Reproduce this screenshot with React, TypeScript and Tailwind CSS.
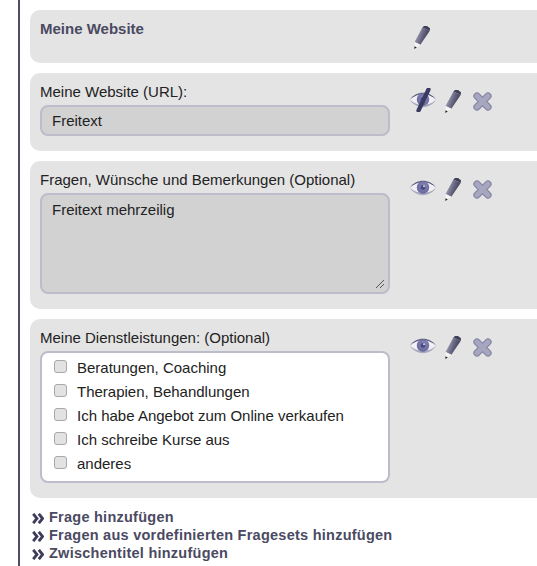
const font = { fontFamily: '"Liberation Sans", Arial, sans-serif' };

function Defs() {
  return (
    <svg width="0" height="0" className="absolute">
      <defs>
        <linearGradient id="pen" x1="0" y1="0.2" x2="1" y2="0.6">
          <stop offset="0" stopColor="#b4b4c8" />
          <stop offset="0.55" stopColor="#646480" />
          <stop offset="1" stopColor="#2f2f45" />
        </linearGradient>
        <radialGradient id="iris" cx="0.55" cy="0.4" r="0.6">
          <stop offset="0" stopColor="#8a8abc" />
          <stop offset="1" stopColor="#66669a" />
        </radialGradient>
      </defs>
    </svg>
  );
}

function Pencil() {
  return (
    <svg width="16" height="23" viewBox="0 0 16 23" className="block shrink-0">
      <path d="M8.4 1.6 L15.8 4.8 L6.4 18.8 L0.6 16 Z" fill="url(#pen)" />
      <path d="M8.4 1.6 L10 0 L13 0 L16 2.2 L15.8 4.8 Z" fill="#3f3f58" />
      <path d="M0.6 16 L6.4 18.8 L0.4 23 Z" fill="#f4f4f4" />
      <path d="M0.5 20.2 L2.8 21.5 L0.3 23 Z" fill="#1e1e1e" />
    </svg>
  );
}

function Cross() {
  return (
    <svg width="19" height="19" viewBox="0 0 19 19" className="block shrink-0">
      <path d="M4 4 L15 15 M15 4 L4 15" stroke="#80809f" strokeWidth="7.2" strokeLinecap="round" />
      <path d="M4 4 L15 15 M15 4 L4 15" stroke="#a6a6c0" strokeWidth="5.2" strokeLinecap="round" />
    </svg>
  );
}

function Eye({ off = false }: { off?: boolean }) {
  return (
    <svg width="28" height="24" viewBox="0 0 28 24" className="block shrink-0">
      <path d="M1 11.5 C7 2.5 21 2.5 27 11.5 C21 5.5 7 5.5 1 11.5 Z" fill="#5a5a80" />
      <path d="M1 12 C7 21.5 21 21.5 27 12 C21 18 7 18 1 12 Z" fill="#a8a8c0" />
      <path d="M2 11.5 C8 4.5 20 4.5 26 11.5 C20 18.5 8 18.5 2 11.5 Z" fill="#f0f0f5" />
      <circle cx="14" cy="11.5" r="6.2" fill="url(#iris)" />
      <circle cx="14" cy="11.5" r="2.4" fill="#4a4a80" />
      <circle cx="15" cy="10.2" r="0.9" fill="#e8e8f4" />
      {off && <path d="M19.5 1.5 L9.5 22.5" stroke="#3a3a62" strokeWidth="4.2" strokeLinecap="round" />}
    </svg>
  );
}

function Chevrons() {
  return (
    <svg width="12" height="11" viewBox="0 0 12 11" className="block shrink-0">
      <path d="M1.2 0.8 L5 5.5 L1.2 10.2 M6.8 0.8 L10.6 5.5 L6.8 10.2" fill="none" stroke="#3d3d5a" strokeWidth="2.8" />
    </svg>
  );
}

function Tools({ off = false }: { off?: boolean }) {
  return (
    <div className="ml-[19px] flex h-[36px] items-center self-start">
      <div className="-mt-[2px]"><Eye off={off} /></div>
      <div className="ml-[8px]"><Pencil /></div>
      <div className="ml-[12px]"><Cross /></div>
    </div>
  );
}

const services = [
  "Beratungen, Coaching",
  "Therapien, Behandlungen",
  "Ich habe Angebot zum Online verkaufen",
  "Ich schreibe Kurse aus",
  "anderes",
];

const links = ["Frage hinzufügen", "Fragen aus vordefinierten Fragesets hinzufügen", "Zwischentitel hinzufügen"];

export default function App() {
  return (
    <div className="h-[566px] w-[537px] overflow-hidden bg-white text-[15px] text-[#222]" style={font}>
      <Defs />
      <div className="ml-[18px] h-full border-l-[2px] border-[#4d4d68] pl-[10px] pt-[10px]">
        <div className="-mr-2 flex flex-col gap-[10px]">
          <section className="flex h-[53px] rounded-l-[10px] bg-[#e4e4e4] pl-[10px] pt-[10px]">
            <h2 className="w-[350px] text-[15px] font-bold leading-[17px] text-[#4a4a62]">Meine Website</h2>
            <div className="ml-[24px] mt-[6px]"><Pencil /></div>
          </section>

          <section className="flex h-[78px] rounded-l-[10px] bg-[#e4e4e4] pl-[10px] pt-[10px]">
            <div className="w-[350px]">
              <div className="leading-[18px]">Meine Website (URL):</div>
              <input
                readOnly
                value="Freitext"
                className="mt-[4px] h-[31px] w-full rounded-[8px] border-[2px] border-[#bcbccb] bg-[#d2d2d2] px-[10px] text-[15px] text-[#222] outline-none"
                style={font}
              />
            </div>
            <Tools off />
          </section>

          <section className="flex h-[148px] rounded-l-[10px] bg-[#e4e4e4] pl-[10px] pt-[10px]">
            <div className="w-[350px]">
              <div className="leading-[18px]">Fragen, Wünsche und Bemerkungen (Optional)</div>
              <div className="relative mt-[4px]">
                <textarea
                  readOnly
                  value="Freitext mehrzeilig"
                  className="block h-[101px] w-full resize-none rounded-[8px] border-[2px] border-[#bcbccb] bg-[#d2d2d2] px-[10px] py-[6px] text-[15px] leading-[18px] text-[#222] outline-none"
                  style={font}
                />
                <svg width="10" height="10" viewBox="0 0 10 10" className="absolute bottom-[5px] right-[5px]">
                  <path d="M1 9 L9 1 M5 9 L9 5" stroke="#555" strokeWidth="1" />
                </svg>
              </div>
            </div>
            <Tools />
          </section>

          <section className="flex h-[179px] rounded-l-[10px] bg-[#e4e4e4] pl-[10px] pt-[10px]">
            <div className="w-[350px]">
              <div className="leading-[18px]">Meine Dienstleistungen: (Optional)</div>
              <div className="mt-[4px] flex h-[132px] flex-col rounded-[8px] border-[2px] border-[#bcbccb] bg-white pl-[12px] pt-[3px]">
                {services.map((s) => (
                  <label key={s} className="flex h-[24px] items-center">
                    <input
                      type="checkbox"
                      className="mb-[4px] h-[13px] w-[13px] appearance-none rounded-[3px] border border-[#a8a8a8] bg-[#e2e2e2]"
                    />
                    <span className="ml-[10px]">{s}</span>
                  </label>
                ))}
              </div>
            </div>
            <Tools />
          </section>
        </div>

        <ul className="ml-[2px] mt-[11px] flex flex-col">
          {links.map((l) => (
            <li key={l} className="flex h-[18px] items-center text-[14.5px] font-bold tracking-[0.25px] text-[#4a4a62]">
              <span className="mr-[5px]"><Chevrons /></span>
              {l}
            </li>
          ))}
        </ul>
      </div>
    </div>
  );
}
